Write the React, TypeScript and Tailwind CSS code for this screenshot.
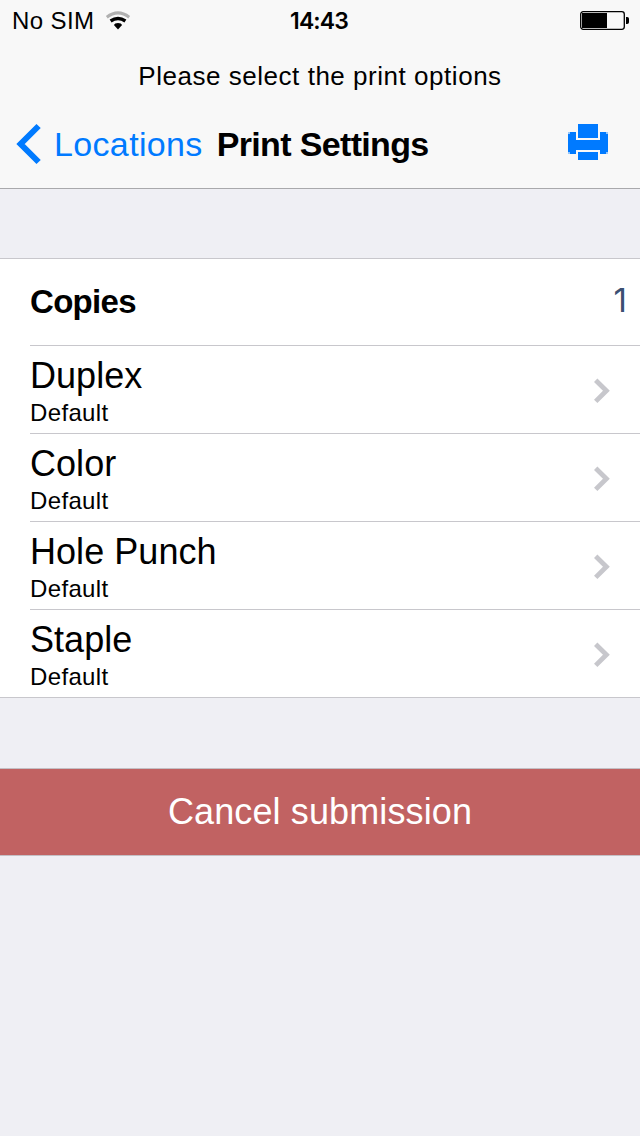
const options = ["Duplex", "Color", "Hole Punch", "Staple"];

function StatusBar() {
  return (
    <div className="grid h-10 grid-cols-3 pr-[11px] pl-3">
      <div className="flex items-center gap-[11px]">
        <span className="text-[24px] leading-[42px] tracking-[0.4px]">No SIM</span>
        <svg className="mb-[2px] h-[19px] w-[26px]" viewBox="0 0 26 19" fill="none">
          <path d="M1.8 6.2Q13 -2.4 24.2 6.2" stroke="#b0b0b0" strokeWidth="3" />
          <path d="M5.6 10Q13 5 20.4 10" stroke="#000" strokeWidth="3.4" />
          <path d="M8.9 14Q9.6 12 13 12T17.1 14L13 18.6Z" fill="#000" />
        </svg>
      </div>
      <div className="pr-[3px] text-center font-['Inter',sans-serif] text-[23px] leading-[42px] font-semibold tracking-[-0.9px]">
        14:43
      </div>
      <div className="flex items-start justify-end pt-[11px]">
        <svg className="h-[19px] w-[49px]" viewBox="0 0 49 19">
          <rect x="0.7" y="0.7" width="43.6" height="17.6" rx="2.5" fill="none" stroke="#000" strokeWidth="1.3" />
          <rect x="2" y="2" width="25" height="15" fill="#000" />
          <path d="M46 6h1.2a1.8 1.8 0 0 1 1.8 1.8v3.4a1.8 1.8 0 0 1-1.8 1.8H46z" fill="#000" />
        </svg>
      </div>
    </div>
  );
}

function PrinterIcon() {
  return (
    <svg className="h-9 w-10" viewBox="0 0 40 36" fill="#007aff">
      <path d="M10 0h20v14H10z" />
      <path d="M2 8h6v8h24V8h6v2h2v18h-2v2h-6v-4H8v4H2v-2H0V10h2z" />
      <path d="M10 28h20v8H10z" />
      <path d="M0 8h2v2H0zM38 8h2v2h-2zM0 28h2v2H0zM38 28h2v2h-2z" opacity=".4" />
    </svg>
  );
}

export default function App() {
  return (
    <div className="min-h-[1136px] w-[640px] bg-[#efeff4] font-['Liberation_Sans',Arial,sans-serif] text-black">
      <header className="h-[189px] border-b border-[#a9a9ac] bg-[#f8f8f8]">
        <StatusBar />
        <p className="h-[73px] text-center text-[26px] leading-[73px] tracking-[0.53px]">
          Please select the print options
        </p>
        <nav className="flex h-[62px] items-center pr-8 pl-4">
          <svg className="h-[42px] w-[25px]" viewBox="0 0 25 42" fill="none" stroke="#007aff" strokeWidth="6">
            <path d="M22.6 3L4.6 21L22.6 39" />
          </svg>
          <button className="ml-[13px] text-[34px] leading-[62px] tracking-[0.35px] text-[#007aff]">Locations</button>
          <h1 className="ml-[14px] text-[34px] leading-[62px] font-bold tracking-[-0.65px]">Print Settings</h1>
          <div className="mb-1 ml-auto">
            <PrinterIcon />
          </div>
        </nav>
      </header>

      <section className="mt-[69px] border-y border-[#c8c7cc] bg-white pl-[30px]">
        <div className="flex h-[86px] items-center justify-between pr-[13px]">
          <span className="text-[33px] leading-[86px] font-bold tracking-[-0.7px]">Copies</span>
          <span className="pb-[4px] font-['Inter',sans-serif] text-[33px] leading-[80px] font-normal text-[#3b5072]">1</span>
        </div>
        {options.map((name) => (
          <div key={name} className="flex h-[88px] items-center justify-between border-t border-[#c8c7cc] pr-[30px]">
            <div className="pt-[2px]">
              <div className="text-[36px] leading-[44px] tracking-[0.05px]">{name}</div>
              <div className="text-[24px] leading-[30px] tracking-[0.35px]">Default</div>
            </div>
            <svg className="mt-[2px] h-[26px] w-4" viewBox="0 0 16 26" fill="none" stroke="#c7c7cc" strokeWidth="4.8">
              <path d="M1.7 2.2L12.4 12.8L1.7 23.4" />
            </svg>
          </div>
        ))}
      </section>

      <button className="mt-[70px] block h-[88px] w-full border-y border-[#c4bfc4] bg-[#c16262] text-center text-[36px] leading-[86px] tracking-[0.12px] text-white">
        Cancel submission
      </button>
    </div>
  );
}
